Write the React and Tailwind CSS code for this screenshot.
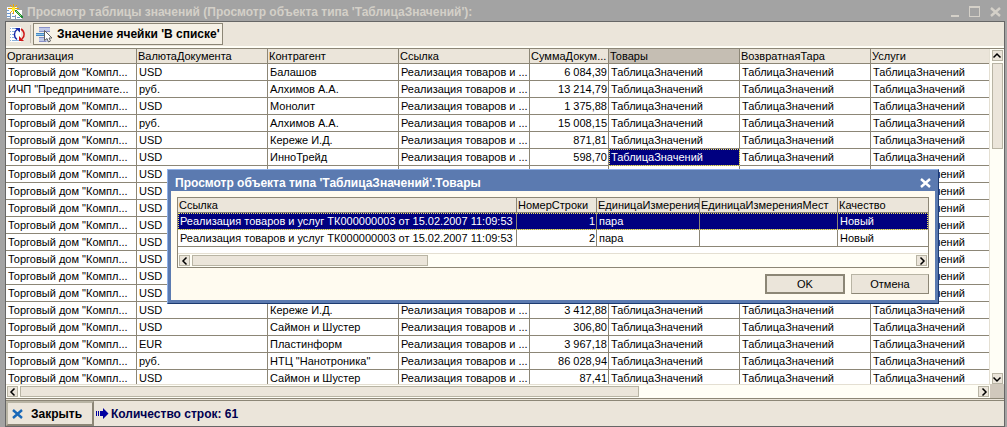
const ORG = 'Торговый дом "Компл...'
const REF = 'Реализация товаров и ...'
const VT = 'ТаблицаЗначений'

const columns = [
  { name: 'Организация', width: 'w-[131px]' },
  { name: 'ВалютаДокумента', width: 'w-[131px]' },
  { name: 'Контрагент', width: 'w-[131px]' },
  { name: 'Ссылка', width: 'w-[131px]' },
  { name: 'СуммаДокум...', width: 'w-[79px]' },
  { name: 'Товары', width: 'w-[131px]', active: true },
  { name: 'ВозвратнаяТара', width: 'w-[131px]' },
  { name: 'Услуги', width: '' },
]

const rows = [
  [ORG, 'USD', 'Балашов', '6 084,39'],
  ['ИЧП "Предпринимате...', 'руб.', 'Алхимов А.А.', '13 214,79'],
  [ORG, 'USD', 'Монолит', '1 375,88'],
  [ORG, 'руб.', 'Алхимов А.А.', '15 008,15'],
  [ORG, 'USD', 'Кереже И.Д.', '871,81'],
  [ORG, 'USD', 'ИнноТрейд', '598,70'],
  [ORG, 'USD', '', ''],
  [ORG, 'USD', '', ''],
  [ORG, 'USD', '', ''],
  [ORG, 'USD', '', ''],
  [ORG, 'USD', '', ''],
  [ORG, 'USD', '', ''],
  [ORG, 'USD', '', ''],
  [ORG, 'USD', '', ''],
  [ORG, 'USD', 'Кереже И.Д.', '3 412,88'],
  [ORG, 'USD', 'Саймон и Шустер', '306,80'],
  [ORG, 'EUR', 'Пластинформ', '3 967,18'],
  [ORG, 'руб.', 'НТЦ "Нанотроника"', '86 028,94'],
  [ORG, 'USD', 'Саймон и Шустер', '87,41'],
]

const SELECTED_ROW = 5

const dialogColumns = [
  { name: 'Ссылка', width: 'w-[339px]' },
  { name: 'НомерСтроки', width: 'w-[80px]' },
  { name: 'ЕдиницаИзмерения', width: 'w-[103px]' },
  { name: 'ЕдиницаИзмеренияМест', width: 'w-[138px]' },
  { name: 'Качество', width: '' },
]

const dialogRows = [
  ['Реализация товаров и услуг ТК000000003 от 15.02.2007 11:09:53', '1', 'пара', '', 'Новый'],
  ['Реализация товаров и услуг ТК000000003 от 15.02.2007 11:09:53', '2', 'пара', '', 'Новый'],
]

function AppIcon() {
  return (
    <svg width="17" height="16" viewBox="0 0 17 16" shapeRendering="crispEdges" aria-hidden="true">
      <path d="M1 3h10v11H1z" fill="#f4f8ff" />
      <path d="M5 6h11v9H5z" fill="#fff" />
      <path d="M1 6h2v1H1zM1 9h3v1H1zM1 12h3v1H1zM6 9h2v1H6zM6 12h3v1H6zM11 13h3v1h-3z" fill="#6a98d0" />
      <path d="M4 8h1v7H4zM9 11h1v4H9zM5 15h11v1H5z" fill="#8898a8" />
      <path d="M7 0h1v3H7zM7 7h1v3H7zM2 4h4v1H2zM9 4h4v1H9zM4 1h1v1H4zM5 2h1v1H5zM10 1h1v1h-1zM9 2h1v1H9zM4 8h1v1H4zM5 7h1v1H5z" fill="#f0a800" />
      <path d="M6 3h3v4H6z" fill="#ffee30" />
      <path d="M9 6h2v1h1v1h1v1h1v1h1v1h1v1h1v2h-2v-1h-1v-1h-1v-1h-1v-1h-1V9h-1V8H9z" fill="#208838" />
      <path d="M10 7h1v1h1v1h1v1h1v1h1v1h-1v-1h-1v-1h-1V9h-1V8h-1z" fill="#98e878" />
    </svg>
  )
}

function RefreshIcon() {
  return (
    <svg width="17" height="17" viewBox="0 0 17 17" fill="none" aria-hidden="true">
      <path d="M1 1h11v15H1z" fill="#fff" />
      <path d="M1 2.500h1M3 2.500h8M1 5.500h1M3 5.500h3M1 8.500h1M3 8.500h2M1 11.500h1M3 11.500h2M1 14.500h1M3 14.500h8" stroke="#88b0dc" />
      <path d="M8 13.500C4.500 11 4.500 6 8 3.500" stroke="#1828a8" strokeWidth="1.500" />
      <path d="M6 2h5v4.500z" fill="#1828a8" />
      <path d="M12 3c4 2.500 4 7.500 1 10" stroke="#d01818" strokeWidth="1.500" />
      <path d="M10 10v5h5z" fill="#d01818" />
    </svg>
  )
}

function CellIcon() {
  return (
    <svg width="17" height="17" viewBox="0 0 17 17" shapeRendering="crispEdges" aria-hidden="true">
      <path d="M3 1h11v5H3zM3 11h11v5H3z" fill="#c0c8e8" />
      <path d="M3 1h11v1H3zM3 5h11v1H3zM3 11h7v1H3zM3 15h7v1H3z" fill="#8890c8" />
      <path d="M0 7h12v3H0z" fill="#4888c0" />
      <path d="M0 8h9v1H0z" fill="#90c8f0" />
      <path d="M8.500 4.500v10l2.500-2 1.500 3.500 2-1-1.500-3h3z" fill="#fff" stroke="#606060" shapeRendering="auto" />
    </svg>
  )
}

function CloseMark({ className }) {
  return (
    <svg width="11" height="10" viewBox="0 0 11 10" className={className} aria-hidden="true">
      <path d="M1 1l9 8M10 1l-9 8" stroke="currentColor" strokeWidth="2.400" />
    </svg>
  )
}

const arrowPaths = {
  left: 'M6.500 1.500L3 5l3.500 3.500',
  right: 'M3.500 1.500L7 5 3.500 8.500',
  up: 'M1.500 6.500L5 3l3.500 3.500',
  down: 'M1.500 3.500L5 7l3.500-3.500',
}

function ScrollArrow({ dir, label }) {
  return (
    <button
      type="button"
      aria-label={label}
      className="flex size-[11px] shrink-0 items-center justify-center border border-[#b8b4a4] bg-[#ebe5da]"
    >
      <svg width="10" height="10" viewBox="0 0 10 10" fill="none" className="shrink-0" aria-hidden="true">
        <path d={arrowPaths[dir]} stroke="#000" strokeWidth="1.500" />
      </svg>
    </button>
  )
}

function HScroll({ thumb }) {
  return (
    <div className="flex h-[14px] min-w-0 flex-1 items-center gap-0.5 border-t border-[#e4dfd2] bg-[#fffef6] px-px">
      <ScrollArrow dir="left" label="Влево" />
      <div className="min-w-0 flex-1">
        <div className={`h-[11px] border border-[#b8b4a4] bg-[#ebe5da] ${thumb}`} />
      </div>
      <ScrollArrow dir="right" label="Вправо" />
    </div>
  )
}

function HeaderCell({ name, width, active }) {
  return (
    <th
      scope="col"
      className={`h-[15px] border-r border-b border-[#8c8676] p-0 pl-px text-left leading-[14px] font-normal last:border-r-0 ${width} ${active ? 'bg-[#c5beb3]' : 'bg-[#ebe5da]'}`}
    >
      {name}
    </th>
  )
}

function Cell({ children, right, selected }) {
  return (
    <td
      className={`h-[17px] border-r border-b border-[#8c8676] p-0 leading-4 last:border-r-0 ${right ? 'pr-px text-right' : 'pl-0.5'} ${selected ? 'bg-[#000080] text-white outline-1 -outline-offset-1 outline-[#f0e860] outline-dotted' : ''}`}
    >
      {children}
    </td>
  )
}

function MainTable() {
  return (
    <table className="w-full table-fixed border-separate border-spacing-0 bg-white whitespace-nowrap">
      <thead>
        <tr>
          {columns.map((c) => (
            <HeaderCell key={c.name} {...c} />
          ))}
        </tr>
      </thead>
      <tbody>
        {rows.map(([org, currency, partner, sum], i) => (
          <tr key={i}>
            <Cell>{org}</Cell>
            <Cell>{currency}</Cell>
            <Cell>{partner}</Cell>
            <Cell>{REF}</Cell>
            <Cell right>{sum}</Cell>
            <Cell selected={i === SELECTED_ROW}>{VT}</Cell>
            <Cell>{VT}</Cell>
            <Cell>{VT}</Cell>
          </tr>
        ))}
      </tbody>
    </table>
  )
}

function Dialog() {
  return (
    <div
      role="dialog"
      aria-label="Просмотр объекта типа 'ТаблицаЗначений'.Товары"
      className="absolute top-[169px] left-[167px] w-[772px] border border-t-[#8fb0e8] border-r-[#1c3a70] border-b-[#1c3a70] border-l-[#8fb0e8] bg-[#5b7ab0] px-[3px] pb-[3px]"
    >
      <div className="flex h-[21px] items-center justify-between px-1 pt-1 text-white">
        <h2 className="text-[12px] leading-4 font-bold">Просмотр объекта типа 'ТаблицаЗначений'.Товары</h2>
        <button type="button" aria-label="Закрыть окно">
          <CloseMark />
        </button>
      </div>
      <div className="bg-[#fffbf0] p-1.5">
        <div className="border border-[#8c8676] bg-white">
          <table className="mb-1.5 w-full table-fixed border-separate border-spacing-0 whitespace-nowrap">
            <thead>
              <tr>
                {dialogColumns.map((c) => (
                  <HeaderCell key={c.name} {...c} />
                ))}
              </tr>
            </thead>
            <tbody>
              {dialogRows.map((row, i) => (
                <tr
                  key={i}
                  className={i === 0 ? 'bg-[#000080] text-white outline-1 -outline-offset-1 outline-[#f0e860] outline-dotted' : ''}
                >
                  {row.map((value, j) => (
                    <Cell key={j} right={j === 1}>
                      {value}
                    </Cell>
                  ))}
                </tr>
              ))}
            </tbody>
          </table>
          <div className="flex">
            <HScroll thumb="w-[236px]" />
          </div>
        </div>
        <div className="mt-1.5 flex justify-end gap-1.5">
          <button type="button" className="h-5 w-20 border-2 border-[#8c8676] bg-[#ebe5da] leading-4">
            OK
          </button>
          <button
            type="button"
            className="h-5 w-[78px] border border-t-[#b8b4a4] border-r-[#8c8676] border-b-[#8c8676] border-l-[#b8b4a4] bg-[#ebe5da] leading-4"
          >
            Отмена
          </button>
        </div>
      </div>
    </div>
  )
}

export default function App() {
  return (
    <div className="relative flex h-screen flex-col overflow-hidden bg-[#a3a3a3] pr-0.5 pl-[5px] font-['Liberation_Sans',Arial,sans-serif] text-[11px] text-black">
      <header className="flex h-[21px] shrink-0 items-center justify-between pt-0.5 pr-1 pl-px text-[#d4d0c8]">
        <div className="flex items-center gap-1">
          <AppIcon />
          <h1 className="text-[12px] leading-4 font-bold">Просмотр таблицы значений (Просмотр объекта типа 'ТаблицаЗначений'):</h1>
        </div>
        <div className="flex items-center gap-2.5">
          <button type="button" aria-label="Свернуть" className="flex h-[11px] w-2 items-end">
            <span className="h-0.5 w-2 bg-current" />
          </button>
          <button type="button" aria-label="Развернуть" className="size-[11px] border border-t-2 border-current" />
          <button type="button" aria-label="Закрыть окно">
            <CloseMark />
          </button>
        </div>
      </header>

      <div className="flex min-h-0 flex-1 flex-col border border-[#666] bg-[#ebe5da]">
        <div className="flex h-6 shrink-0 items-center pl-[3px]">
          <button type="button" aria-label="Обновить">
            <RefreshIcon />
          </button>
          <span className="mr-0.5 ml-1 h-[18px] w-px bg-[#c5beb3]" />
          <button
            type="button"
            className="flex h-[22px] items-center gap-1 border border-[#8c8676] bg-[#f6f1e6] px-0.5 text-[12px] font-bold"
          >
            <CellIcon />
            Значение ячейки 'В списке'
          </button>
        </div>

        <div className="flex min-h-0 flex-1 flex-col border-t-2 border-[#fffef6]">
          <div className="flex min-h-0 flex-1 flex-col border-y border-[#8c8676] bg-[#fffef6]">
            <div className="flex min-h-0 flex-1">
              <div className="min-w-0 flex-1 overflow-hidden">
                <MainTable />
              </div>
              <div className="flex w-[15px] shrink-0 flex-col items-center gap-0.5 border-l border-[#e4dfd2] pt-px">
                <ScrollArrow dir="up" label="Вверх" />
                <div className="min-h-0 flex-1">
                  <div className="h-[86px] w-[11px] border border-[#b8b4a4] bg-[#ebe5da]" />
                </div>
                <ScrollArrow dir="down" label="Вниз" />
              </div>
            </div>
            <div className="flex shrink-0">
              <HScroll thumb="w-[619px]" />
              <div className="w-3.5 bg-[#d0c8bc]" />
            </div>
          </div>
        </div>

        <footer className="mt-px flex h-[26px] shrink-0 items-center border-t border-[#8c8676]">
          <button
            type="button"
            className="flex h-[25px] w-[88px] items-center gap-2 border-2 border-t-[#b8b4a4] border-r-[#8c8676] border-b-[#8c8676] border-l-[#b8b4a4] pl-1 text-[12px] font-bold"
          >
            <CloseMark className="text-[#1868b8]" />
            Закрыть
          </button>
          <svg width="13" height="11" viewBox="0 0 13 11" className="ml-0.5" aria-hidden="true">
            <path d="M0 3h1v5H0zM2 3h1v5H2zM4 3h3V0l5.500 5.500L7 11V8H4z" fill="#0000a0" />
          </svg>
          <output className="ml-0.5 text-[12px] font-bold text-[#000050]">Количество строк: 61</output>
        </footer>
      </div>

      <Dialog />
    </div>
  )
}
